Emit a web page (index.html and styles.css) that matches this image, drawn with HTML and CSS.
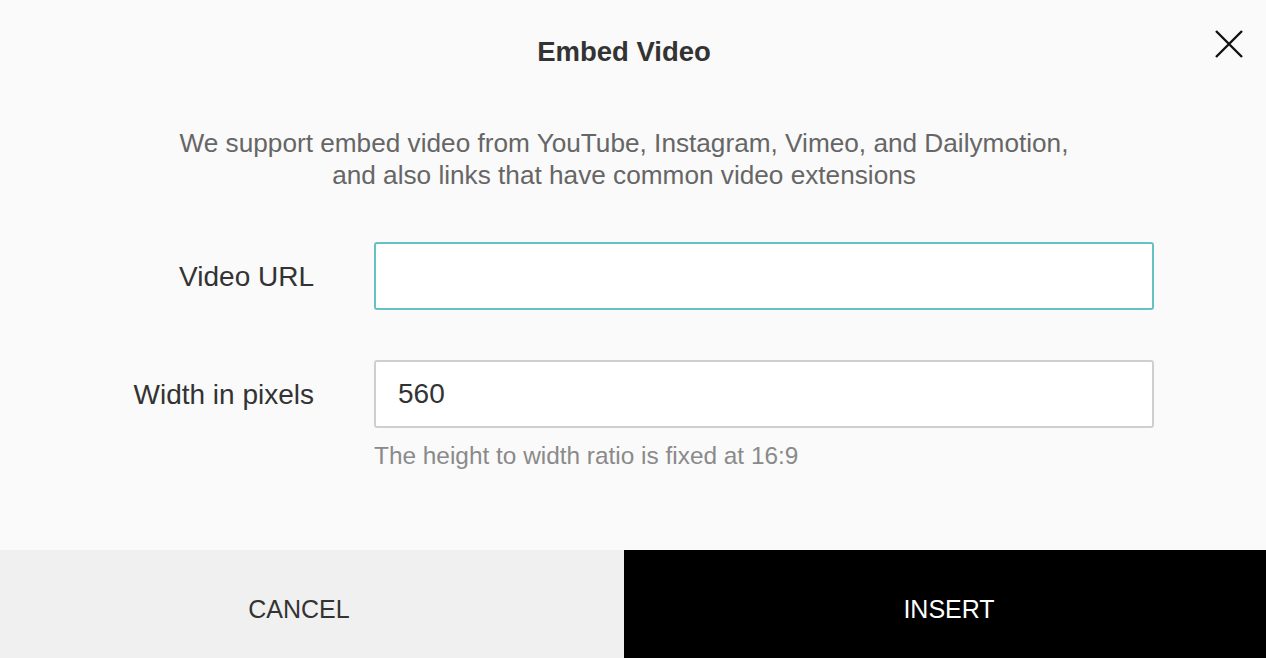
FILE: index.html
```html
<!DOCTYPE html>
<html lang="en">
<head>
<meta charset="utf-8">
<title>Embed Video</title>
<link rel="stylesheet" href="styles.css">
</head>
<body>
<div class="dialog">
  <div class="header">
    <h1 class="title">Embed Video</h1>
    <button class="close" aria-label="Close">
      <svg width="28" height="28" viewBox="0 0 28 28"><path d="M1 1 L27 27 M27 1 L1 27" stroke="#111" stroke-width="2.4" fill="none"/></svg>
    </button>
  </div>
  <p class="desc">We support embed video from YouTube, Instagram, Vimeo, and Dailymotion,<br>and also links that have common video extensions</p>
  <div class="form">
    <label class="label">Video URL</label>
    <input class="input focused" type="text" value="">
    <label class="label">Width in pixels</label>
    <div class="field">
      <input class="input" type="text" value="560">
      <div class="help">The height to width ratio is fixed at 16:9</div>
    </div>
  </div>
  <div class="actions">
    <button class="btn cancel">CANCEL</button>
    <button class="btn insert">INSERT</button>
  </div>
</div>
</body>
</html>
```
FILE: styles.css
```css
* { box-sizing: border-box; }
html, body { margin: 0; padding: 0; }
body {
  width: 1266px;
  height: 658px;
  background: #fafafa;
  font-family: "Liberation Sans", Arial, Helvetica, sans-serif;
  overflow: hidden;
}
.dialog {
  height: 658px;
  display: flex;
  flex-direction: column;
}
.header {
  position: relative;
  width: 1248px;
  padding-top: 36px;
}
.title {
  margin: 0;
  text-align: center;
  font-size: 27.5px;
  line-height: 32px;
  font-weight: bold;
  color: #333;
}
.close {
  position: absolute;
  left: 1215px;
  top: 30px;
  width: 28px;
  height: 28px;
  padding: 0;
  border: 0;
  background: none;
  display: block;
}
.close svg { display: block; }
.desc {
  width: 1248px;
  margin: 59px 0 0;
  text-align: center;
  font-size: 26.2px;
  line-height: 32px;
  color: #666;
}
.form {
  display: grid;
  grid-template-columns: 314px 780px;
  column-gap: 60px;
  row-gap: 48px;
  margin-top: 51px;
  align-items: start;
}
.label {
  text-align: right;
  font-size: 28px;
  line-height: 70px;
  color: #333;
}
.input {
  display: block;
  width: 780px;
  height: 68px;
  border: 2px solid #cfcfcf;
  border-radius: 3px;
  background: #fff;
  padding: 0 22px;
  font-family: inherit;
  font-size: 28px;
  color: #333;
  outline: none;
}
.input.focused { border-color: #66c2c2; }
.help {
  margin-top: 14px;
  font-size: 24.4px;
  line-height: 28px;
  color: #8a8a8a;
}
.actions {
  margin-top: auto;
  display: flex;
  height: 108px;
}
.btn {
  border: 0;
  margin: 0;
  font-family: inherit;
  font-size: 25px;
  cursor: pointer;
}
.cancel {
  width: 624px;
  background: #f0f0f0;
  color: #333;
  padding: 10px 26px 0 0;
}
.insert {
  flex: 1;
  background: #000;
  color: #fff;
  padding: 10px 0 0 8px;
}
```
